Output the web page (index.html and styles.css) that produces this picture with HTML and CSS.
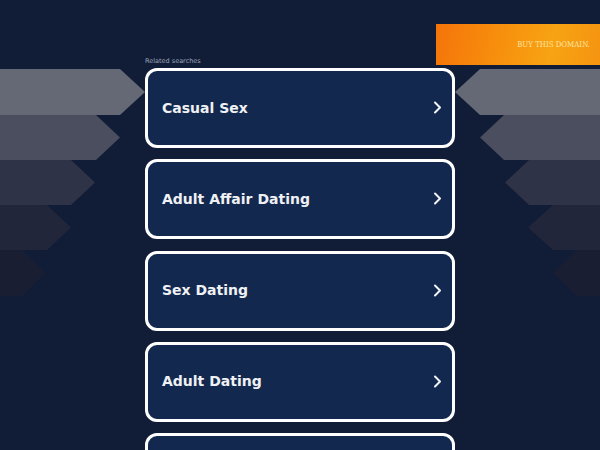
FILE: index.html
```html
<!DOCTYPE html>
<html>
<head>
<meta charset="utf-8">
<link rel="stylesheet" href="styles.css">
</head>
<body>
<div class="page">
  <svg class="bg" width="600" height="450" viewBox="0 0 600 450" aria-hidden="true">
    <polygon points="0,69 120,69 145,92 120,115 0,115" fill="#656976"/>
    <polygon points="0,115 96,115 120,137.5 96,160 0,160" fill="#4a4e5e"/>
    <polygon points="0,160 71,160 95,182.5 71,205 0,205" fill="#2f3347"/>
    <polygon points="0,205 47,205 71,227.5 47,250 0,250" fill="#22263a"/>
    <polygon points="0,250 22,250 45,273 22,296 0,296" fill="#1a1e33"/>
    <polygon points="600,69 480,69 455,92 480,115 600,115" fill="#656976"/>
    <polygon points="600,115 504,115 480,137.5 504,160 600,160" fill="#4a4e5e"/>
    <polygon points="600,160 529,160 505,182.5 529,205 600,205" fill="#2f3347"/>
    <polygon points="600,205 553,205 528,227.5 553,250 600,250" fill="#22263a"/>
    <polygon points="600,250 577,250 553,273 577,296 600,296" fill="#1a1e33"/>
  </svg>
  <a class="buy" href="#">BUY THIS DOMAIN.</a>
  <main class="main">
    <div class="label">Related searches</div>
    <ul class="list">
      <li class="card"><span>Casual Sex</span><svg class="chev" width="9" height="13" viewBox="0 0 9 13"><path d="M2 1.5 L7 6.5 L2 11.5" fill="none" stroke="#f2f3f6" stroke-width="2" stroke-linecap="round" stroke-linejoin="round"/></svg></li>
      <li class="card"><span>Adult Affair Dating</span><svg class="chev" width="9" height="13" viewBox="0 0 9 13"><path d="M2 1.5 L7 6.5 L2 11.5" fill="none" stroke="#f2f3f6" stroke-width="2" stroke-linecap="round" stroke-linejoin="round"/></svg></li>
      <li class="card"><span>Sex Dating</span><svg class="chev" width="9" height="13" viewBox="0 0 9 13"><path d="M2 1.5 L7 6.5 L2 11.5" fill="none" stroke="#f2f3f6" stroke-width="2" stroke-linecap="round" stroke-linejoin="round"/></svg></li>
      <li class="card"><span>Adult Dating</span><svg class="chev" width="9" height="13" viewBox="0 0 9 13"><path d="M2 1.5 L7 6.5 L2 11.5" fill="none" stroke="#f2f3f6" stroke-width="2" stroke-linecap="round" stroke-linejoin="round"/></svg></li>
      <li class="card"></li>
    </ul>
  </main>
</div>
</body>
</html>
```
FILE: styles.css
```css
html, body {
  margin: 0;
  padding: 0;
  background: #111c37;
}
.page {
  position: relative;
  width: 600px;
  height: 450px;
  overflow: hidden;
  background: #111c37;
  font-family: "DejaVu Sans", Verdana, sans-serif;
}
.bg {
  position: absolute;
  left: 0;
  top: 0;
  z-index: 0;
}
.buy {
  position: absolute;
  top: 24px;
  right: 0;
  width: 164px;
  height: 41px;
  box-sizing: border-box;
  display: flex;
  align-items: center;
  justify-content: flex-end;
  padding-right: 10px;
  background: linear-gradient(100deg, #f5740a 0%, #f7900d 40%, #f7a313 70%, #f59410 100%);
  color: #fde3a2;
  font-family: "DejaVu Serif", "Liberation Serif", serif;
  font-stretch: condensed;
  font-size: 7.8px;
  text-decoration: none;
  z-index: 2;
}
.main {
  position: relative;
  z-index: 1;
  width: 310px;
  margin: 0 auto;
  padding-top: 57px;
}
.label {
  font-size: 6.5px;
  color: #9ea5b8;
  line-height: 9px;
  height: 11px;
}
.list {
  list-style: none;
  margin: 0;
  padding: 0;
  display: flex;
  flex-direction: column;
  gap: 11.3px;
}
.card {
  box-sizing: border-box;
  height: 80px;
  border: 3px solid #ffffff;
  border-radius: 12px;
  background: #12284f;
  display: flex;
  align-items: center;
  justify-content: space-between;
  padding: 0 10px 1px 14px;
  color: #f0f1f4;
  font-weight: bold;
  font-size: 14px;
}
.chev {
  display: block;
}
```
